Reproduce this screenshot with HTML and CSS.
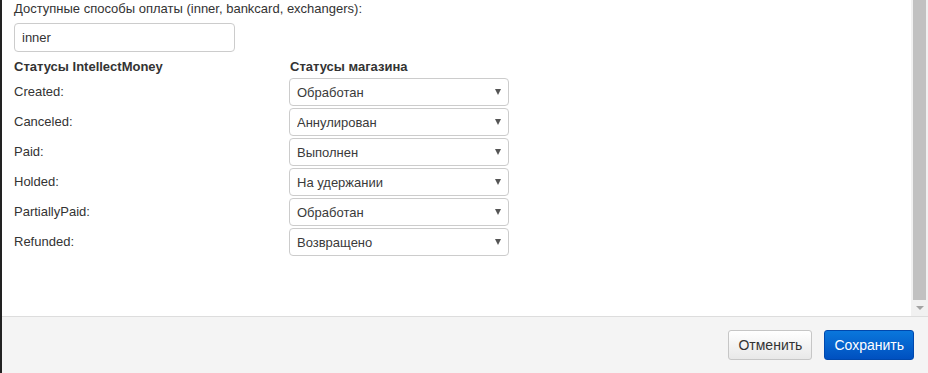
FILE: index.html
```html
<!DOCTYPE html>
<html lang="ru">
<head>
<meta charset="UTF-8">
<title>IntellectMoney - настройки</title>
<link rel="stylesheet" href="styles.css">
</head>
<body>
<div class="dialog">
  <div class="dialog-body">
    <div class="content">
      <p class="field-label">Доступные способы оплаты (inner, bankcard, exchangers):</p>
      <input class="text-input" type="text" value="inner">

      <div class="status-grid">
        <div class="col-title">Статусы IntellectMoney</div>
        <div class="col-title">Статусы магазина</div>

        <div class="status-name">Created:</div>
        <div class="select-box"><select><option>Обработан</option></select></div>

        <div class="status-name">Canceled:</div>
        <div class="select-box"><select><option>Аннулирован</option></select></div>

        <div class="status-name">Paid:</div>
        <div class="select-box"><select><option>Выполнен</option></select></div>

        <div class="status-name">Holded:</div>
        <div class="select-box"><select><option>На удержании</option></select></div>

        <div class="status-name">PartiallyPaid:</div>
        <div class="select-box"><select><option>Обработан</option></select></div>

        <div class="status-name">Refunded:</div>
        <div class="select-box"><select><option>Возвращено</option></select></div>
      </div>
    </div>
    <!-- fake scrollbar -->
    <div class="scrollbar">
      <div class="scroll-thumb"></div>
      <div class="scroll-arrow"></div>
    </div>
  </div>
  <div class="dialog-footer">
    <button class="btn btn-default">Отменить</button>
    <button class="btn btn-primary">Сохранить</button>
  </div>
</div>
</body>
</html>
```

FILE: styles.css
```css
html, body {
  margin: 0;
  height: 100%;
}
body {
  background: #222;
  font-family: "Liberation Sans", Arial, sans-serif;
  font-size: 13px;
  color: #333;
  overflow: hidden;
}
.dialog {
  margin-left: 2px;
  height: 373px;
  display: flex;
  flex-direction: column;
  background: #fff;
}
.dialog-body {
  flex: 1;
  display: flex;
  min-height: 0;
}
.content {
  flex: 1;
  padding: 0 12px;
}
.field-label {
  margin: 0;
  line-height: 18px;
}
.text-input {
  display: block;
  box-sizing: border-box;
  width: 221px;
  height: 29px;
  margin-top: 5px;
  padding: 0 7px;
  border: 1px solid #ccc;
  border-radius: 4px;
  font-family: inherit;
  font-size: 13px;
  color: #333;
}
.status-grid {
  display: grid;
  grid-template-columns: 275px 220px;
  row-gap: 2px;
  margin-top: 6px;
  align-items: center;
}
.col-title {
  font-weight: bold;
  line-height: 18px;
}
.col-title + .col-title {
  padding-left: 1px;
}
.status-name {
  line-height: 28px;
}
.select-box {
  position: relative;
}
.select-box select {
  display: block;
  width: 100%;
  height: 28px;
  padding: 0 20px 0 7px;
  border: 1px solid #ccc;
  border-radius: 4px;
  background: #fff;
  font-family: inherit;
  font-size: 13px;
  color: #3a3a3a;
  -webkit-appearance: none;
  appearance: none;
}
.select-box::after {
  content: "";
  position: absolute;
  right: 8px;
  top: 11px;
  border-left: 3px solid transparent;
  border-right: 3px solid transparent;
  border-top: 6px solid #555;
  pointer-events: none;
}
.scrollbar {
  width: 17px;
  background: #f1f1f1;
  position: relative;
}
.scroll-thumb {
  margin: 0 2px;
  height: 300px;
  background: #c1c1c1;
}
.scroll-arrow {
  position: absolute;
  left: 5px;
  top: 306px;
  border-left: 4px solid transparent;
  border-right: 4px solid transparent;
  border-top: 4px solid #a3a3a3;
}
.dialog-footer {
  height: 56px;
  border-top: 1px solid #ddd;
  background: #f4f4f4;
  display: flex;
  justify-content: flex-end;
  align-items: center;
  gap: 12px;
  padding-right: 14px;
}
.btn {
  height: 30px;
  padding: 0 9px;
  border-radius: 3px;
  font-family: inherit;
  font-size: 14px;
  cursor: pointer;
}
.btn-default {
  background: linear-gradient(#fff, #e8e8e8);
  border: 1px solid #c6c6c6;
  color: #333;
}
.btn-primary {
  background: linear-gradient(#0a77dc, #0050c0);
  border: 1px solid #0048ad;
  color: #fff;
}
```
